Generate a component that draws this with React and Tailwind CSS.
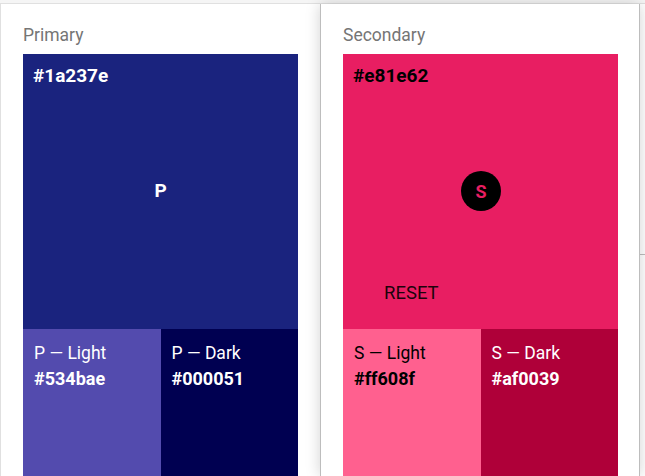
import React from "react";

const swatches = [
  {
    title: "Primary",
    main: { hex: "#1a237e", bg: "bg-[#1a237e]", text: "text-white" },
    letter: "P",
    light: { label: "P — Light", hex: "#534bae", bg: "bg-[#534bae]", text: "text-white" },
    dark: { label: "P — Dark", hex: "#000051", bg: "bg-[#000051]", text: "text-white" },
  },
  {
    title: "Secondary",
    main: { hex: "#e81e62", bg: "bg-[#e81e62]", text: "text-black" },
    letter: "S",
    light: { label: "S — Light", hex: "#ff608f", bg: "bg-[#ff608f]", text: "text-black" },
    dark: { label: "S — Dark", hex: "#af0039", bg: "bg-[#af0039]", text: "text-white" },
  },
];

const Shade = ({ shade }) => (
  <div className={`flex-1 h-full px-[11px] pt-[12px] ${shade.bg} ${shade.text}`}>
    <div className="text-[17.5px] leading-[25px]">{shade.label}</div>
    <div className="text-[18px] leading-[25px] font-bold">{shade.hex}</div>
  </div>
);

const Card = ({ data, secondary }) => (
  <div
    className={`w-[320px] h-full bg-white pl-[22px] pt-[20px] ${
      secondary
        ? "border-x border-[#bdbdbd] shadow-[0_0_14px_rgba(0,0,0,0.18)] z-10"
        : "border-l border-[#e0e0e0]"
    }`}
  >
    <div className="text-[17.5px] leading-[22px] text-[#757575] mb-[8px]">{data.title}</div>
    <div className="w-[275px] flex flex-col">
      <div className={`h-[275px] relative px-[10px] pt-[10px] ${data.main.bg} ${data.main.text}`}>
        <div className="text-[19px] leading-[24px] font-bold">{data.main.hex}</div>
        {secondary ? (
          <>
            <div className="absolute left-[118px] top-[117px] w-[40px] h-[40px] rounded-full bg-black flex items-center justify-center text-[#e81e62] text-[18px] font-bold">
              S
            </div>
            <div className="absolute left-[41px] top-[227px] text-[18.5px] leading-[24px] text-black/90">RESET</div>
          </>
        ) : (
          <div className="absolute inset-0 flex items-center justify-center text-[19px] font-bold">
            {data.letter}
          </div>
        )}
      </div>
      <div className="flex h-[160px]">
        <Shade shade={data.light} />
        <Shade shade={data.dark} />
      </div>
    </div>
  </div>
);

export default function App() {
  return (
    <div
      className="w-[645px] h-[476px] overflow-hidden bg-[#f5f5f5]"
      style={{ fontFamily: "Roboto, 'Liberation Sans', sans-serif" }}
    >
      <div className="mt-[3px] h-[473px] flex border-t border-[#e0e0e0] bg-white">
        <Card data={swatches[0]} />
        <Card data={swatches[1]} secondary />
        <div className="flex-1 h-full pt-[250px]">
          <div className="h-px bg-[#bdbdbd]" />
        </div>
      </div>
    </div>
  );
}
